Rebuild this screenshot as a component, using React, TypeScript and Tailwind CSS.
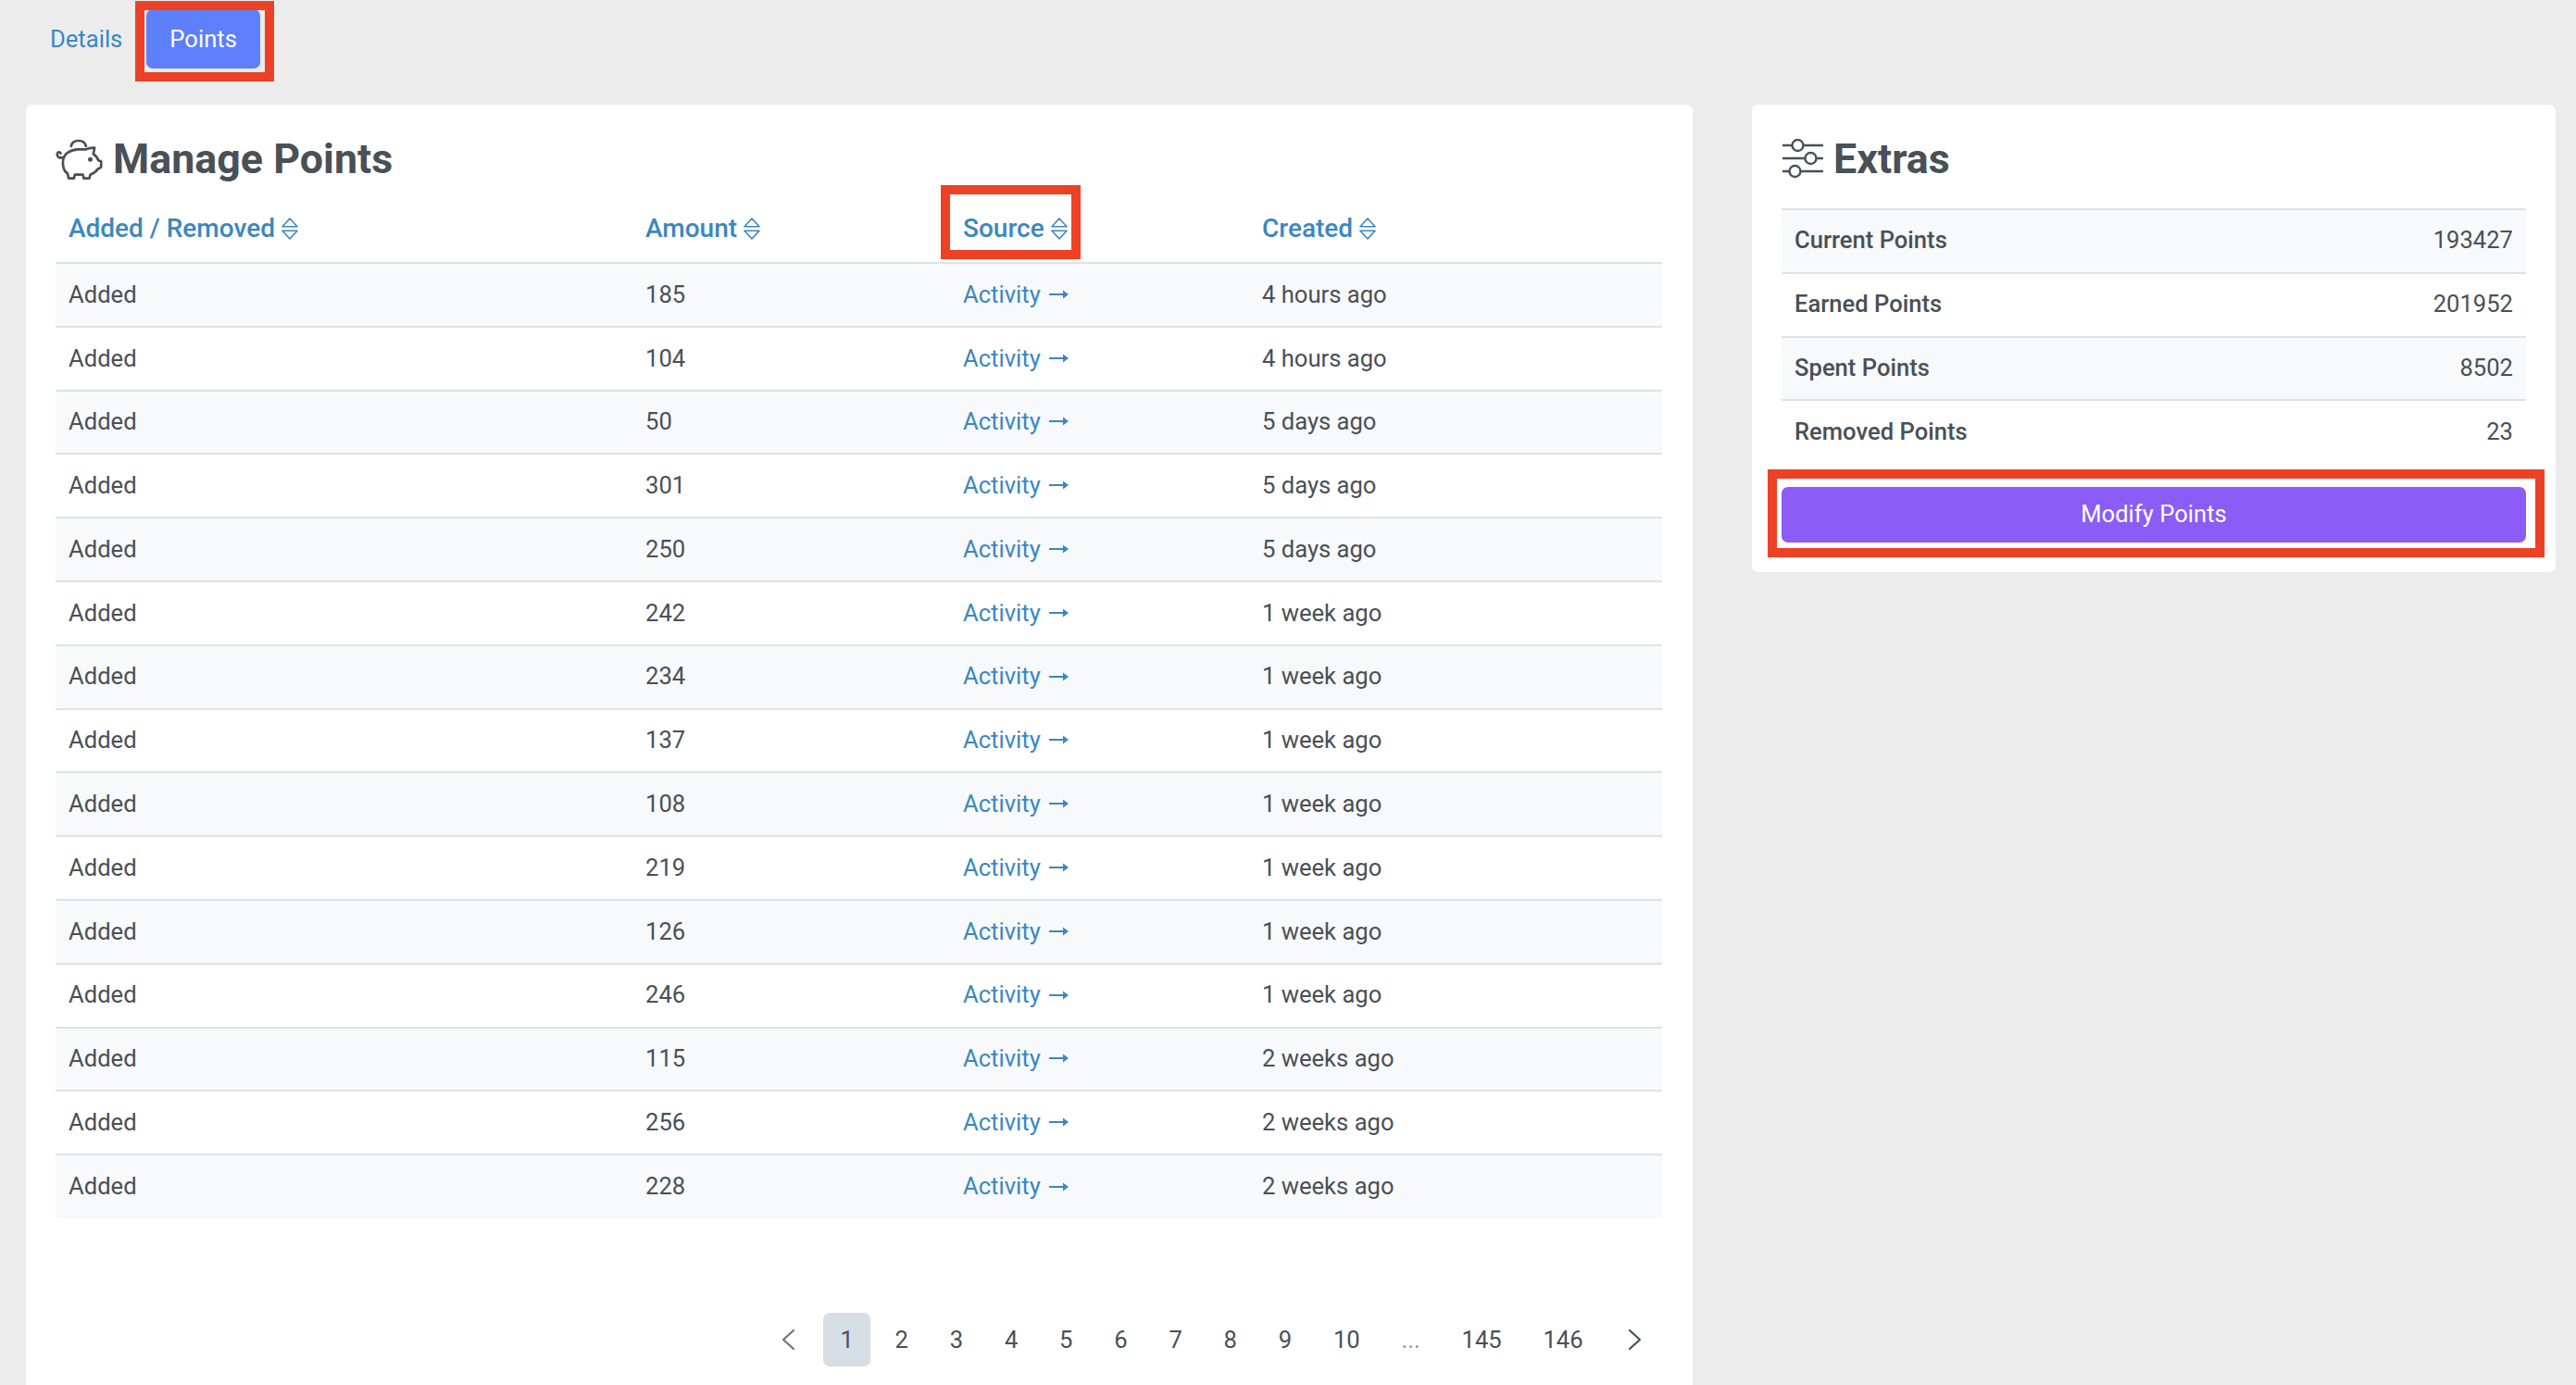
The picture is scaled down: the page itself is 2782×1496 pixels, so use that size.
const rows: [string, string][] = [
  ["185", "4 hours ago"],
  ["104", "4 hours ago"],
  ["50", "5 days ago"],
  ["301", "5 days ago"],
  ["250", "5 days ago"],
  ["242", "1 week ago"],
  ["234", "1 week ago"],
  ["137", "1 week ago"],
  ["108", "1 week ago"],
  ["219", "1 week ago"],
  ["126", "1 week ago"],
  ["246", "1 week ago"],
  ["115", "2 weeks ago"],
  ["256", "2 weeks ago"],
  ["228", "2 weeks ago"],
];

const extras: [string, string][] = [
  ["Current Points", "193427"],
  ["Earned Points", "201952"],
  ["Spent Points", "8502"],
  ["Removed Points", "23"],
];

const pages = ["1", "2", "3", "4", "5", "6", "7", "8", "9", "10", "...", "145", "146"];

function SortIcon() {
  return (
    <svg width="18" height="24" viewBox="0 0 18 24" fill="none" stroke="#3b87bf" strokeWidth="1.6" strokeLinejoin="round" className="ml-[7px] shrink-0">
      <path d="M1 9.8 9 1l8 8.8z" />
      <path d="M1 14.2h16L9 23z" />
    </svg>
  );
}

function ArrowIcon() {
  return (
    <svg width="21" height="12" viewBox="0 0 21 12" fill="none" className="ml-[9px] shrink-0">
      <path d="M0 6h16" stroke="#3b87bf" strokeWidth="2" />
      <path d="M15 1.5 21 6l-6 4.5z" fill="#3b87bf" />
    </svg>
  );
}

function PiggyIcon() {
  return (
    <svg width="51" height="44" viewBox="0 0 152 132" fill="none" stroke="#495057" strokeWidth="8" strokeLinecap="round" strokeLinejoin="round" className="shrink-0">
      <path d="M50 24C52 11 62 6 74 6s22 6 24 18" />
      <path d="M26 60C12 64 3 58 5 48c1-6 9-7 11-1" />
      <path d="M24 68C27 48 48 35 72 34h26c8-4 18-6 28-5l-4 20c8 5 14 13 17 22l8 1v20l-12 7c-5 8-12 13-23 17l-3 12H91l-3-12H62l-3 12H42l-4-17C27 107 21 88 24 68z" />
      <circle cx="112" cy="67" r="3.5" fill="#495057" />
    </svg>
  );
}

function SlidersIcon() {
  return (
    <svg width="46" height="44" viewBox="0 0 46 44" fill="none" stroke="#495057" strokeWidth="2.4" className="shrink-0">
      <path d="M1 7h10.5M23.5 7H45" />
      <circle cx="17.5" cy="7" r="6" />
      <path d="M1 21h24.5M37.5 21H45" />
      <circle cx="31.5" cy="21" r="6" />
      <path d="M1 35h7.5M20.5 35H45" />
      <circle cx="14.5" cy="35" r="6" />
    </svg>
  );
}

function Chevron({ dir, color }: { dir: "left" | "right"; color: string }) {
  return (
    <svg width="16" height="24" viewBox="0 0 16 24" fill="none" stroke={color} strokeWidth="2.2" strokeLinecap="round" strokeLinejoin="round">
      <path d={dir === "left" ? "M14 2 3 12l11 10" : "M2 2l11 10L2 22"} />
    </svg>
  );
}

function Marker({ className }: { className: string }) {
  return <div className={`absolute border-[10px] border-[#ec4124] ${className}`} />;
}

export default function App() {
  return (
    <div className="relative h-[1496px] w-[2782px] overflow-hidden bg-[#ececec] font-['Roboto',sans-serif] text-[25.6px] text-[#495057]">
      <div className="flex h-[75px] items-start pl-[28px] pt-[10px]">
        <a className="flex h-[64px] items-center px-[26px] text-[#3b87bf]">Details</a>
        <a className="flex h-[64px] items-center rounded-[7px] bg-[#5e7ffb] px-[25px] text-white">Points</a>
      </div>

      <div className="mt-[38px] flex items-start gap-[64px] pl-[28px]">
        <div className="h-[1500px] w-[1800px] rounded-[7px] bg-white px-[32px] pt-[32px]">
          <h2 className="mb-[12px] flex h-[52px] items-center gap-[11px] pt-[1px] text-[44.8px] font-bold">
            <PiggyIcon />
            Manage Points
          </h2>

          <table className="w-[1735px] table-fixed border-collapse">
            <thead>
              <tr className="h-[75px] text-left text-[28px] text-[#3b87bf]">
                {[
                  ["Added / Removed", "w-[623px]"],
                  ["Amount", "w-[343px]"],
                  ["Source", "w-[323px]"],
                  ["Created", "w-[446px]"],
                ].map(([label, width]) => (
                  <th key={label} className={`${width} px-[14px] pt-[2px] font-medium`}>
                    <span className="flex items-center">
                      {label}
                      <SortIcon />
                    </span>
                  </th>
                ))}
              </tr>
            </thead>
            <tbody>
              {rows.map(([amount, created], index) => (
                <tr key={index} className={`h-[68.8px] border-t-2 border-[#dee2e6] ${index % 2 === 0 ? "bg-[#f7f9fb]" : "bg-white"}`}>
                  <td className="px-[14px] pb-[1px]">Added</td>
                  <td className="px-[14px] pb-[1px]">{amount}</td>
                  <td className="px-[14px] pb-[1px] text-[#3b87bf]">
                    <span className="flex items-center">
                      Activity
                      <ArrowIcon />
                    </span>
                  </td>
                  <td className="px-[14px] pb-[1px]">{created}</td>
                </tr>
              ))}
            </tbody>
          </table>

          <div className="mt-[102px] flex items-center justify-end gap-[8px]">
            <div className="flex h-[58px] w-[60px] items-center justify-center">
              <Chevron dir="left" color="#6c757d" />
            </div>
            {pages.map((page, index) => (
              <div
                key={page}
                className={`flex h-[58px] min-w-[51px] items-center justify-center rounded-[7px] px-[18.4px] ${index === 0 ? "bg-[#d6dee6]" : ""} ${page === "..." ? "text-[#8a949c]" : ""}`}
              >
                {page}
              </div>
            ))}
            <div className="flex h-[58px] w-[60px] items-center justify-center">
              <Chevron dir="right" color="#495057" />
            </div>
          </div>
        </div>

        <div className="w-[868px] rounded-[7px] bg-white p-[32px]">
          <h2 className="mb-[28px] flex h-[52px] items-center gap-[10px] pt-[1px] text-[44.8px] font-bold">
            <SlidersIcon />
            Extras
          </h2>
          <div>
            {extras.map(([label, value], index) => (
              <div
                key={label}
                className={`flex h-[68.8px] items-center justify-between border-t-2 border-[#dee2e6] px-[14px] pb-[2px] ${index % 2 === 0 ? "bg-[#f7f9fb]" : "bg-white"}`}
              >
                <span className="font-medium">{label}</span>
                <span>{value}</span>
              </div>
            ))}
          </div>
          <button className="mt-[26px] h-[60px] w-full rounded-[7px] bg-[#8b5cf6] pb-[1px] text-center text-white">Modify Points</button>
        </div>
      </div>

      <Marker className="left-[146px] top-[1px] h-[87px] w-[150px]" />
      <Marker className="left-[1016px] top-[200px] h-[80px] w-[151px]" />
      <Marker className="left-[1909px] top-[507px] h-[95px] w-[839px]" />
    </div>
  );
}
